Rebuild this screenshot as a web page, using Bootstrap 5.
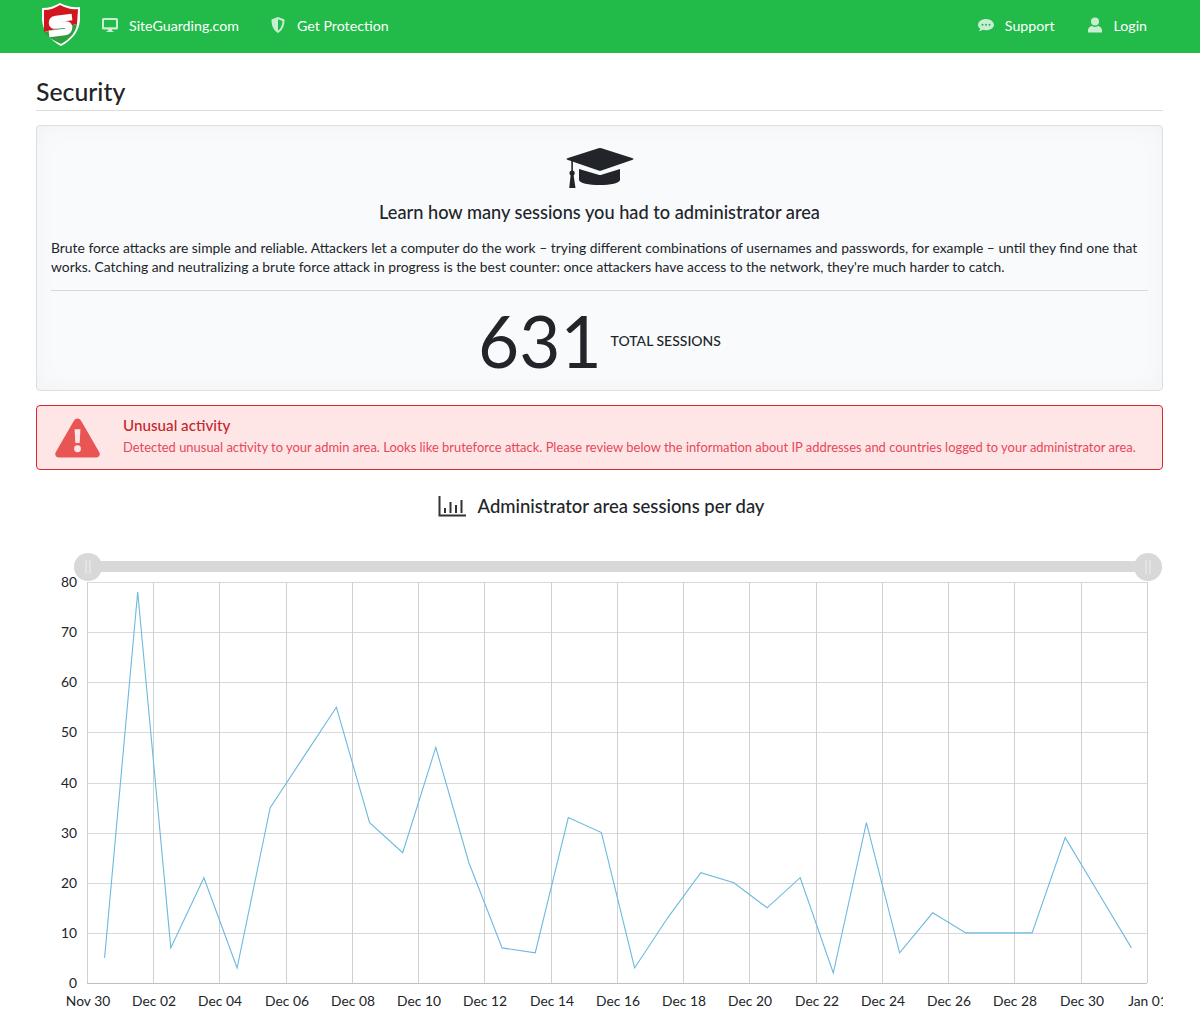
<!DOCTYPE html>
<html lang="en">
<head>
    <meta charset="UTF-8">
    <meta name="viewport" content="width=device-width, initial-scale=1.0">
    <title>Security</title>
    <link href="https://cdn.jsdelivr.net/npm/bootstrap@5.3.0/dist/css/bootstrap.min.css" rel="stylesheet">
    <style>
        html, body { height: 1015px; overflow: hidden; }
        body { font-family: Lato, "Liberation Sans", sans-serif; color: #212529; background: #fff; }
        .top-bar { background: #22bb4a; height: 53px; padding: 0 36px 0 41px; }
        .top-logo { width: 40px; height: 45px; margin-top: 2px; align-self: flex-start; }
        .top-links { gap: 31px; margin-left: 21px; }
        .top-link { color: #fff; font-size: 14.2px; text-decoration: none; display: flex; align-items: center; gap: 11px; padding-bottom: 2px; }
        .top-link svg { width: 16px; height: 16px; fill: rgba(255,255,255,.75); }
        .top-right { margin-right: 17px; gap: 32px; }
        .page-wrap { padding: 0 37px 0 36px; }
        .page-title { font-size: 24.8px; font-weight: 500; line-height: 31px; margin: 23px 0 0; padding-bottom: 3px; border-bottom: 1px solid #ddd; height: 35px; }
        .learn-box { margin-top: 14px; height: 266px; background: #f9fafc; border: 1px solid #dcdee2; border-radius: 4px; box-shadow: inset 0 0 24px rgba(0,0,0,.035); padding: 21px 14px 0; }
        .learn-icon { display: block; width: 70px; height: 42px; margin: 0 auto; fill: #212529; }
        .learn-head { font-size: 18.2px; font-weight: 500; line-height: 24px; text-align: center; margin: 11px 0 14px; }
        .learn-text { font-size: 13.87px; line-height: 19px; margin: 0 0 14px; }
        .learn-rule { margin: 0; border-top: 1px solid #d8d8d8; opacity: 1; }
        .total-row { margin-top: 14px; }
        .total-num { font-size: 71px; font-weight: 400; line-height: 72px; }
        .total-label { font-size: 14px; font-weight: 500; line-height: 18px; margin-left: 9px; }
        .warn-box { margin: 14px 0 0; height: 65px; background: #ffe6e6; border: 1px solid #d9282d; border-radius: 4px; padding: 0 18px; }
        .warn-icon { width: 45px; height: 40px; fill: #e95454; margin-right: 23px; flex: none; }
        .warn-body { padding-bottom: 4px; }
        .warn-title { color: #c4252c; font-size: 15.2px; font-weight: 500; line-height: 20px; margin-bottom: 2px; }
        .warn-text { color: #e7465a; font-size: 12.95px; line-height: 20px; white-space: nowrap; }
        .chart-head { font-size: 18.45px; font-weight: 500; line-height: 24px; margin-top: 24px; padding-left: 3px; gap: 12px; }
        .chart-head svg { width: 28px; height: 22px; }
        .chart-box { display: block; margin-top: 14px; overflow: hidden; }
        .chart-box text { font-family: Lato, "Liberation Sans", sans-serif; font-size: 13.8px; fill: #212529; }
    </style>
</head>
<body>

    <!-- Top bar -->
    <nav class="top-bar d-flex align-items-center">
        <svg class="top-logo" viewBox="0 0 40 45">
            <path d="M20 44 C9 38 2 30 1 18 L1 6 C8 6 14 4 19 1 C25 4 32 6 39 5 L39 18 C38 30 31 38 20 44Z" fill="#fff"/>
            <path d="M3 8 C9 8 14 6 19 3 C25 6 31 8 37 7 L36 22 L3 30Z" fill="#d2161f"/>
            <path d="M3.500 30 L36 22 C35 30 29 37 20 42 C12 38 6 35 3.500 30Z" fill="#2f9e3f"/>
            <path d="M31 15 L15 17 Q11 17.500 11 21 Q11 24 15 23.500 L25 22.500 Q28.500 22.500 28 26 Q27.500 29.500 24 30 L8 32" fill="none" stroke="#fff" stroke-width="6.500" stroke-linejoin="round"/>
        </svg>
        <div class="top-links d-flex">
            <a class="top-link" href="#">
                <svg viewBox="0 0 16 16"><path d="M1.500 1h13A1.500 1.500 0 0 1 16 2.500v8.500a1.500 1.500 0 0 1-1.500 1.500H10v1.500h1.500V15h-7v-1h1.500v-1.500H1.500A1.500 1.500 0 0 1 0 11V2.500A1.500 1.500 0 0 1 1.500 1zM2 3V10.300h12V3z" fill-rule="evenodd"/></svg>
                SiteGuarding.com
            </a>
            <a class="top-link" href="#">
                <svg viewBox="0 0 16 16"><path d="M8 0 L14.500 2.500 C14.500 8 13 13 8 16 C3 13 1.500 8 1.500 2.500Z M8 2.200 V13.700 C11 11.500 12.300 8 12.500 3.900Z" fill-rule="evenodd"/></svg>
                Get Protection
            </a>
        </div>
        <div class="top-links top-right d-flex ms-auto">
            <a class="top-link" href="#">
                <svg viewBox="0 0 16 16"><path d="M8 2C3.600 2 0 4.600 0 7.800c0 1.600.9 3 2.300 4-.2 1-.8 1.800-1.500 2.400 1.500 0 2.900-.6 3.900-1.400 1 .3 2.100.5 3.300.5 4.400 0 8-2.500 8-5.500S12.400 2 8 2zM4.500 6.800a1 1 0 1 1 0 2 1 1 0 0 1 0-2zm3.500 0a1 1 0 1 1 0 2 1 1 0 0 1 0-2zm3.500 0a1 1 0 1 1 0 2 1 1 0 0 1 0-2z" fill-rule="evenodd"/></svg>
                Support
            </a>
            <a class="top-link" href="#">
                <svg viewBox="0 0 16 16"><circle cx="8" cy="4.500" r="4"/><path d="M1 15.500v-2c0-3 2.500-4.500 4.200-4.500 1 .7 1.800 1 2.800 1s1.800-.3 2.800-1c1.700 0 4.200 1.500 4.200 4.500v2z"/></svg>
                Login
            </a>
        </div>
    </nav>

    <div class="page-wrap">
        <h1 class="page-title">Security</h1>

        <!-- Intro -->
        <div class="learn-box">
            <svg class="learn-icon" viewBox="0 0 70 42">
                <path d="M33.500 1.300 Q35 .8 36.500 1.300 L67 11 Q70 12 67 13 L36.500 23.600 Q35 24.100 33.500 23.600 L3 13 Q0 12 3 11Z"/>
                <path d="M14 22 L33.500 27.800 Q35 28.200 36.500 27.800 L55 22 V33 C55 36 45 38 35 38 C24 38 14 36 14 33Z"/>
                <rect x="6.300" y="13" width="1.600" height="13"/>
                <circle cx="7.100" cy="26" r="2.600"/>
                <path d="M5.800 27 H8.400 L10.500 41 H4.200Z"/>
            </svg>
            <div class="learn-head">Learn how many sessions you had to administrator area</div>
            <p class="learn-text">Brute force attacks are simple and reliable. Attackers let a computer do the work – trying different combinations of usernames and passwords, for example – until they find one that works. Catching and neutralizing a brute force attack in progress is the best counter: once attackers have access to the network, they're much harder to catch.</p>
            <hr class="learn-rule">
            <div class="total-row d-flex justify-content-center align-items-center">
                <span class="total-num">631</span>
                <span class="total-label">TOTAL SESSIONS</span>
            </div>
        </div>

        <!-- Warning -->
        <div class="warn-box d-flex align-items-center">
            <svg class="warn-icon" viewBox="0 0 46 40">
                <path d="M23 0 C25 0 26 1 27 3 L45 34 C47 37 45 40 42 40 H4 C1 40 -1 37 1 34 L19 3 C20 1 21 0 23 0Z M20 11 L20.800 25 H25.200 L26 11Z M23 27.500 A3.500 3.500 0 1 0 23 34.500 A3.500 3.500 0 1 0 23 27.500Z" fill-rule="evenodd"/>
            </svg>
            <div class="warn-body">
                <div class="warn-title">Unusual activity</div>
                <div class="warn-text">Detected unusual activity to your admin area. Looks like bruteforce attack. Please review below the information about IP addresses and countries logged to your administrator area.</div>
            </div>
        </div>

        <!-- Chart -->
        <div class="chart-head d-flex justify-content-center align-items-center">
            <svg viewBox="0 0 28 22" fill="none" stroke="#333">
                <path d="M1.500 1 V20.500 H28" stroke-width="2"/>
                <path d="M7 18 V13 M12.500 18 V7 M18 18 V10 M23.500 18 V5" stroke-width="2"/>
            </svg>
            Administrator area sessions per day
        </div>
        <svg id="sessionsChart" class="chart-box" width="1127" height="483"></svg>
    </div>

    <script>
        // same numbers as the original chart, one per day from Nov 30
        const sessions = [5,78,7,21,3,35,45,55,32,26,47,24,7,6,33,30,3,13,22,20,15,21,2,32,6,14,10,10,10,29,18,7];
        const labels = ['Nov 30','Dec 02','Dec 04','Dec 06','Dec 08','Dec 10','Dec 12','Dec 14','Dec 16','Dec 18','Dec 20','Dec 22','Dec 24','Dec 26','Dec 28','Dec 30','Jan 01'];
        const left = 51, right = 1111, top0 = 50, bottom = 451;
        const stepX = (right - left) / 16, perUnit = (bottom - top0) / 80;
        let out = '';

        // slider
        out += '<rect x="52" y="29" width="1060" height="11" fill="#d8d8d8"/>';
        [52, 1112].forEach(x => {
            out += `<circle cx="${x}" cy="35" r="14" fill="#d8d8d8"/>`;
            out += `<path d="M${x - 2} 28 V42 M${x + 2} 28 V42" stroke="#eee" stroke-width="1"/>`;
        });

        // grid
        for (let v = 0; v <= 80; v += 10) {
            const y = Math.round(bottom - v * perUnit) + .5;
            out += `<line x1="${left}" x2="${right}" y1="${y}" y2="${y}" stroke="${v ? '#d9d9d9' : '#bfbfbf'}"/>`;
            out += `<text x="41" y="${y + 4}" text-anchor="end">${v}</text>`;
        }
        labels.forEach((t, i) => {
            const x = Math.round(left + i * stepX - .01) + .5;
            out += `<line x1="${x}" x2="${x}" y1="${top0}" y2="${bottom}" stroke="#d0d0d0"/>`;
            out += `<text x="${x + .5}" y="474" text-anchor="middle">${t}</text>`;
        });

        // line
        const pts = sessions.map((v, i) => (left + 1 + (i + .5) * stepX / 2).toFixed(1) + ',' + (bottom - v * perUnit).toFixed(1));
        out += `<polyline points="${pts.join(' ')}" fill="none" stroke="#6db9de" stroke-width="1.1"/>`;

        document.getElementById('sessionsChart').innerHTML = out;
    </script>
    <script src="https://cdn.jsdelivr.net/npm/bootstrap@5.3.0/dist/js/bootstrap.bundle.min.js"></script>
</body>
</html>
